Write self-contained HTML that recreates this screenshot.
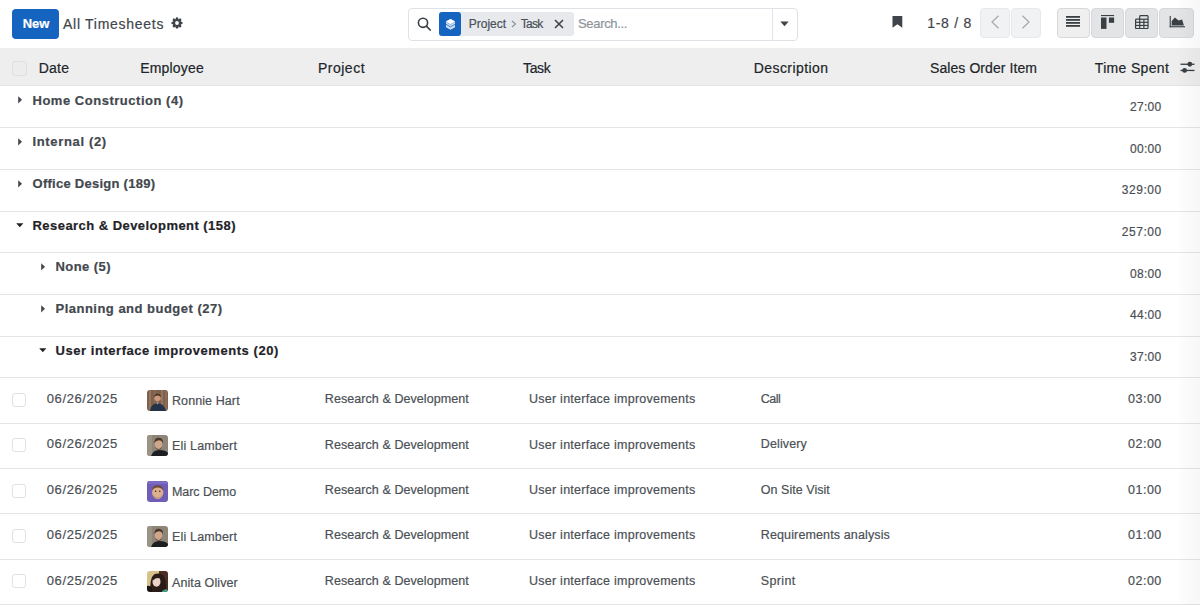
<!DOCTYPE html>
<html><head><meta charset="utf-8"><style>
html,body{margin:0;padding:0;background:#fff;width:1200px;height:605px;overflow:hidden;}
body{position:relative;font-family:"Liberation Sans",sans-serif;}
.t{position:absolute;white-space:nowrap;font-family:"Liberation Sans",sans-serif;-webkit-text-stroke:0.2px currentColor;}
.r{position:absolute;display:block;}
</style></head><body>
<div class="r" style="left:12px;top:9px;width:47px;height:30px;background:#1565c0;border-radius:4px;"></div>
<div class="t" style="left:22.70px;top:17.10px;font-size:13px;line-height:13px;font-weight:bold;color:#ffffff;letter-spacing:-0.075px;">New</div>
<div class="t" style="left:63.00px;top:16.75px;font-size:14px;line-height:14px;color:#41464c;letter-spacing:0.727px;">All Timesheets</div>
<svg class="r" style="left:169.8px;top:16.2px" width="14" height="14" viewBox="0 0 14 14"><g fill="#3f444a"><circle cx="7" cy="7" r="4.1"/><circle cx="11.30" cy="7.00" r="1.35"/><circle cx="10.04" cy="10.04" r="1.35"/><circle cx="7.00" cy="11.30" r="1.35"/><circle cx="3.96" cy="10.04" r="1.35"/><circle cx="2.70" cy="7.00" r="1.35"/><circle cx="3.96" cy="3.96" r="1.35"/><circle cx="7.00" cy="2.70" r="1.35"/><circle cx="10.04" cy="3.96" r="1.35"/></g><circle cx="7" cy="7" r="1.9" fill="#fff"/></svg>
<div class="r" style="left:408px;top:8px;width:389.5px;height:32.5px;border:1px solid #dee2e6;border-radius:4px;background:#fff;box-sizing:border-box;"></div>
<div class="r" style="left:771.5px;top:8px;width:1px;height:32.5px;background:#e2e5e8;"></div>
<svg class="r" style="left:417px;top:17px" width="15" height="14" viewBox="0 0 15 14"><circle cx="6" cy="5.8" r="4.6" fill="none" stroke="#3a3f44" stroke-width="1.6"/><line x1="9.4" y1="9.2" x2="13.2" y2="13" stroke="#3a3f44" stroke-width="1.7" stroke-linecap="round"/></svg>
<div class="r" style="left:439px;top:12px;width:135px;height:23.5px;background:#e7e9ed;border-radius:3px;"></div>
<div class="r" style="left:439px;top:12px;width:21.5px;height:23.5px;background:#1565c0;border-radius:3px;"></div>
<svg class="r" style="left:445.5px;top:18.5px" width="9" height="11" viewBox="0 0 9 11"><path d="M4.5 0 L9 2.6 V8.2 L4.5 10.8 L0 8.2 V2.6 Z" fill="#fff" opacity=".8"/><path d="M4.5 0 L9 2.6 L4.5 5.2 L0 2.6 Z" fill="#fff"/><path d="M0 5.3 L4.5 7.9 L9 5.3" fill="none" stroke="#1565c0" stroke-width=".8"/><path d="M0 2.9 L4.5 5.5 L9 2.9" fill="none" stroke="#1565c0" stroke-width=".6" opacity=".6"/></svg>
<div class="t" style="left:468.80px;top:17.84px;font-size:12px;line-height:12px;color:#495057;letter-spacing:-0.025px;">Project</div>
<svg class="r" style="left:511px;top:20px" width="6" height="8" viewBox="0 0 6 8"><path d="M1 1 L4.5 4 L1 7" fill="none" stroke="#8a9097" stroke-width="1.1"/></svg>
<div class="t" style="left:520.80px;top:17.84px;font-size:12px;line-height:12px;color:#495057;letter-spacing:-0.750px;">Task</div>
<svg class="r" style="left:554px;top:18.5px" width="10" height="10" viewBox="0 0 10 10"><path d="M1 1 L9 9 M9 1 L1 9" stroke="#3f444a" stroke-width="1.6"/></svg>
<div class="t" style="left:578.00px;top:17.10px;font-size:13px;line-height:13px;color:#8f959b;letter-spacing:-0.325px;">Search...</div>
<svg class="r" style="left:780px;top:21px" width="9" height="6" viewBox="0 0 9 6"><path d="M0.3 0.5 L8.7 0.5 L4.5 5.3 Z" fill="#3f444a"/></svg>
<svg class="r" style="left:892px;top:16px" width="11" height="12" viewBox="0 0 11 12"><path d="M0.5 0 H10.3 V11.7 L5.4 8.3 L0.5 11.7 Z" fill="#3f444a"/></svg>
<div class="t" style="left:927.20px;top:15.95px;font-size:14px;line-height:14px;color:#3f444a;letter-spacing:0.717px;">1-8 / 8</div>
<div class="r" style="left:980px;top:8px;width:30px;height:30px;background:#f1f2f4;border:1px solid #e6e8eb;border-radius:4px;box-sizing:border-box;"></div>
<div class="r" style="left:1011.2px;top:8px;width:30.3px;height:30px;background:#f1f2f4;border:1px solid #e6e8eb;border-radius:4px;box-sizing:border-box;"></div>
<svg class="r" style="left:990px;top:15px" width="10" height="14" viewBox="0 0 10 14"><path d="M8.5 0.8 L2 7 L8.5 13.2" fill="none" stroke="#a3a8ad" stroke-width="1.2"/></svg>
<svg class="r" style="left:1021px;top:15px" width="10" height="14" viewBox="0 0 10 14"><path d="M1.5 0.8 L8 7 L1.5 13.2" fill="none" stroke="#a3a8ad" stroke-width="1.2"/></svg>
<div class="r" style="left:1057px;top:7.5px;width:33px;height:30px;background:#efefef;border:1px solid #d6d8db;border-radius:4px;box-sizing:border-box;"></div>
<div class="r" style="left:1091px;top:7.5px;width:33px;height:30px;background:#e2e4e6;border:1px solid #d6d8db;border-radius:4px;box-sizing:border-box;"></div>
<div class="r" style="left:1125px;top:7.5px;width:33px;height:30px;background:#e2e4e6;border:1px solid #d6d8db;border-radius:4px;box-sizing:border-box;"></div>
<div class="r" style="left:1159px;top:7.5px;width:35px;height:30px;background:#e2e4e6;border:1px solid #d6d8db;border-radius:4px;box-sizing:border-box;"></div>
<svg class="r" style="left:1066px;top:16px" width="14" height="11" viewBox="0 0 14 11"><g fill="#3a3f44"><rect x="0" y="0" width="14" height="1.8"/><rect x="0" y="3" width="14" height="1.8"/><rect x="0" y="6" width="14" height="1.8"/><rect x="0" y="9" width="14" height="1.8"/></g></svg>
<svg class="r" style="left:1100.8px;top:15px" width="14" height="14" viewBox="0 0 14 14"><g fill="#3a3f44"><rect x="0" y="0" width="13.1" height="1.1"/><rect x="0" y="2.5" width="5.5" height="11.4"/><rect x="7.9" y="2.5" width="5.2" height="5.3"/></g></svg>
<svg class="r" style="left:1134.7px;top:14.9px" width="14.4" height="14.4" viewBox="0 0 15 15"><g fill="none" stroke="#3a3f44" stroke-width="1.25"><path d="M4.9 4.4 V1.6 Q4.9 0.6 5.9 0.6 H12.6 Q13.6 0.6 13.6 1.6 V13.1 Q13.6 14.1 12.6 14.1 H1.6 Q0.6 14.1 0.6 13.1 V5.4 Q0.6 4.4 1.6 4.4 Z"/><line x1="0.6" y1="7.6" x2="13.6" y2="7.6"/><line x1="0.6" y1="10.9" x2="13.6" y2="10.9"/><line x1="4.9" y1="4.4" x2="4.9" y2="14.1"/><line x1="9.25" y1="4.4" x2="9.25" y2="14.1"/><line x1="4.9" y1="4.4" x2="13.6" y2="4.4"/></g></svg>
<svg class="r" style="left:1168.5px;top:15px" width="17" height="14" viewBox="0 0 17 14"><g fill="#3a3f44"><rect x="0.7" y="1" width="1.1" height="11.3"/><rect x="0.7" y="11.2" width="15.3" height="1.1"/><path d="M2.7 10.5 V6 L5.9 2.4 L9.6 5.6 L13.1 4.6 L14.9 10.5 Z"/></g></svg>
<div class="r" style="left:0px;top:48px;width:1200px;height:37.5px;background:#eeeeee;"></div>
<div class="r" style="left:0px;top:85px;width:1200px;height:1px;background:#e3e3e3;"></div>
<div class="r" style="left:12px;top:61px;width:14.5px;height:15px;border:1px solid #e0e0e0;border-radius:3px;background:#ececec;box-sizing:border-box;"></div>
<div class="t" style="left:38.70px;top:61.45px;font-size:14px;line-height:14px;color:#212529;letter-spacing:0.250px;">Date</div>
<div class="t" style="left:140.30px;top:61.45px;font-size:14px;line-height:14px;color:#212529;letter-spacing:0.164px;">Employee</div>
<div class="t" style="left:318.00px;top:61.45px;font-size:14px;line-height:14px;color:#212529;letter-spacing:0.492px;">Project</div>
<div class="t" style="left:523.00px;top:61.45px;font-size:14px;line-height:14px;color:#212529;letter-spacing:-0.367px;">Task</div>
<div class="t" style="left:753.75px;top:61.45px;font-size:14px;line-height:14px;color:#212529;letter-spacing:0.420px;">Description</div>
<div class="t" style="left:930.00px;top:61.45px;font-size:14px;line-height:14px;color:#212529;letter-spacing:0.080px;">Sales Order Item</div>
<div class="t" style="left:1094.80px;top:61.45px;font-size:14px;line-height:14px;color:#212529;letter-spacing:0.328px;">Time Spent</div>
<svg class="r" style="left:1180px;top:61px" width="15" height="13" viewBox="0 0 15 13"><g fill="#3a3f44"><rect x="0.5" y="2.6" width="14" height="1.3"/><rect x="0.5" y="8.8" width="14" height="1.3"/><circle cx="9.8" cy="3.25" r="2.4"/><circle cx="4.6" cy="9.45" r="2.4"/></g></svg>
<svg class="r" style="left:18.0px;top:96.30px" width="5" height="8" viewBox="0 0 5 8"><path d="M0.2 0.2 V7.5 L4 3.85 Z" fill="#43484e"/></svg>
<div class="t" style="left:32.50px;top:93.50px;font-size:13px;line-height:13px;font-weight:bold;color:#43484e;letter-spacing:0.520px;">Home Construction (4)</div>
<div class="t" style="left:1130.00px;top:100.84px;font-size:12px;line-height:12px;color:#4b5055;letter-spacing:0.300px;">27:00</div>
<div class="r" style="left:0px;top:127.21px;width:1200px;height:1px;background:#e4e5e6;"></div>
<svg class="r" style="left:18.0px;top:138.01px" width="5" height="8" viewBox="0 0 5 8"><path d="M0.2 0.2 V7.5 L4 3.85 Z" fill="#43484e"/></svg>
<div class="t" style="left:32.50px;top:135.21px;font-size:13px;line-height:13px;font-weight:bold;color:#43484e;letter-spacing:0.659px;">Internal (2)</div>
<div class="t" style="left:1130.00px;top:142.55px;font-size:12px;line-height:12px;color:#4b5055;letter-spacing:0.300px;">00:00</div>
<div class="r" style="left:0px;top:168.92px;width:1200px;height:1px;background:#e4e5e6;"></div>
<svg class="r" style="left:18.0px;top:179.72px" width="5" height="8" viewBox="0 0 5 8"><path d="M0.2 0.2 V7.5 L4 3.85 Z" fill="#43484e"/></svg>
<div class="t" style="left:32.50px;top:176.92px;font-size:13px;line-height:13px;font-weight:bold;color:#43484e;letter-spacing:0.264px;">Office Design (189)</div>
<div class="t" style="left:1121.75px;top:184.26px;font-size:12px;line-height:12px;color:#4b5055;letter-spacing:0.560px;">329:00</div>
<div class="r" style="left:0px;top:210.63px;width:1200px;height:1px;background:#e4e5e6;"></div>
<svg class="r" style="left:16.30px;top:222.83px" width="8" height="5" viewBox="0 0 8 5"><path d="M0.2 0.3 H7.4 L3.8 4.3 Z" fill="#1f2328"/></svg>
<div class="t" style="left:32.50px;top:218.63px;font-size:13px;line-height:13px;font-weight:bold;color:#1f2328;letter-spacing:0.454px;">Research &amp; Development (158)</div>
<div class="t" style="left:1121.75px;top:225.97px;font-size:12px;line-height:12px;color:#4b5055;letter-spacing:0.560px;">257:00</div>
<div class="r" style="left:0px;top:252.34px;width:1200px;height:1px;background:#e4e5e6;"></div>
<svg class="r" style="left:40.5px;top:263.14px" width="5" height="8" viewBox="0 0 5 8"><path d="M0.2 0.2 V7.5 L4 3.85 Z" fill="#43484e"/></svg>
<div class="t" style="left:55.50px;top:260.34px;font-size:13px;line-height:13px;font-weight:bold;color:#43484e;letter-spacing:0.429px;">None (5)</div>
<div class="t" style="left:1130.00px;top:267.68px;font-size:12px;line-height:12px;color:#4b5055;letter-spacing:0.300px;">08:00</div>
<div class="r" style="left:0px;top:294.05px;width:1200px;height:1px;background:#e4e5e6;"></div>
<svg class="r" style="left:40.5px;top:304.85px" width="5" height="8" viewBox="0 0 5 8"><path d="M0.2 0.2 V7.5 L4 3.85 Z" fill="#43484e"/></svg>
<div class="t" style="left:55.50px;top:302.05px;font-size:13px;line-height:13px;font-weight:bold;color:#43484e;letter-spacing:0.489px;">Planning and budget (27)</div>
<div class="t" style="left:1130.00px;top:309.39px;font-size:12px;line-height:12px;color:#4b5055;letter-spacing:0.300px;">44:00</div>
<div class="r" style="left:0px;top:335.76px;width:1200px;height:1px;background:#e4e5e6;"></div>
<svg class="r" style="left:38.80px;top:347.96px" width="8" height="5" viewBox="0 0 8 5"><path d="M0.2 0.3 H7.4 L3.8 4.3 Z" fill="#1f2328"/></svg>
<div class="t" style="left:55.50px;top:343.76px;font-size:13px;line-height:13px;font-weight:bold;color:#1f2328;letter-spacing:0.544px;">User interface improvements (20)</div>
<div class="t" style="left:1130.00px;top:351.10px;font-size:12px;line-height:12px;color:#4b5055;letter-spacing:0.300px;">37:00</div>
<div class="r" style="left:0px;top:377.47px;width:1200px;height:1px;background:#e4e5e6;"></div>
<div class="r" style="left:12px;top:392.7px;width:14px;height:14px;border:1px solid #dfe1e4;border-radius:3px;background:#fff;box-sizing:border-box;"></div>
<div class="t" style="left:46.75px;top:392.00px;font-size:13px;line-height:13px;color:#4b5055;letter-spacing:0.606px;">06/26/2025</div>
<svg class="r" style="left:147px;top:389.70px;border-radius:3px" width="21" height="21" viewBox="0 0 21 21"><rect width="21" height="21" fill="#7e604c"/><rect x="2" y="0" width="2" height="21" fill="#94755e"/><rect x="7" y="0" width="1.5" height="21" fill="#8a6b55"/><rect x="14" y="0" width="2" height="21" fill="#94755e"/><rect x="18" y="0" width="2" height="21" fill="#8b6d57"/><path d="M3 21 Q4 13.5 10.5 13 Q17 13.5 19 21 Z" fill="#22334a"/><path d="M9 12.5 L10.5 14.5 L12 12.5 Z" fill="#c9b7a8"/><ellipse cx="10.5" cy="8.3" rx="3.2" ry="4" fill="#c99a7f"/><path d="M7.2 7.5 Q7 3.8 10.5 3.8 Q14 3.8 13.8 7.5 Q13 5.6 10.5 5.6 Q8 5.6 7.2 7.5 Z" fill="#4a3426"/><path d="M7.6 9.5 Q10.5 14 13.4 9.5 Q13 12.4 10.5 12.5 Q8 12.4 7.6 9.5 Z" fill="#6e4a36"/></svg>
<div class="t" style="left:172.00px;top:394.92px;font-size:12.5px;line-height:12.5px;color:#4b5055;letter-spacing:0.090px;">Ronnie Hart</div>
<div class="t" style="left:324.80px;top:393.22px;font-size:12.5px;line-height:12.5px;color:#4b5055;letter-spacing:0.074px;">Research &amp; Development</div>
<div class="t" style="left:529.00px;top:393.22px;font-size:12.5px;line-height:12.5px;color:#4b5055;letter-spacing:0.248px;">User interface improvements</div>
<div class="t" style="left:760.80px;top:393.02px;font-size:12.5px;line-height:12.5px;color:#4b5055;letter-spacing:-0.483px;">Call</div>
<div class="t" style="left:1128.10px;top:393.02px;font-size:12.5px;line-height:12.5px;color:#4b5055;letter-spacing:0.475px;">03:00</div>
<div class="r" style="left:0px;top:422.6px;width:1200px;height:1px;background:#e4e5e6;"></div>
<div class="r" style="left:12px;top:438.1px;width:14px;height:14px;border:1px solid #dfe1e4;border-radius:3px;background:#fff;box-sizing:border-box;"></div>
<div class="t" style="left:46.75px;top:437.40px;font-size:13px;line-height:13px;color:#4b5055;letter-spacing:0.606px;">06/26/2025</div>
<svg class="r" style="left:147px;top:435.10px;border-radius:3px" width="21" height="21" viewBox="0 0 21 21"><rect width="21" height="21" fill="#8d8577"/><rect x="0" y="0" width="5" height="21" fill="#9b9384"/><path d="M4 21 Q6 15 12 15 Q19 15 21 18 V21 Z" fill="#1d1e22"/><ellipse cx="11.5" cy="9.5" rx="3.8" ry="5" fill="#cfa58c"/><path d="M7.3 8 Q7.5 2.5 12 2.8 Q16.5 3 16 8.5 Q15 5.2 12 5.2 Q9 5.2 7.3 8 Z" fill="#4b3628"/><path d="M8.2 11.5 Q11.5 16.5 15 11.5 Q14.8 14.6 11.5 14.8 Q8.6 14.6 8.2 11.5 Z" fill="#5b4334"/></svg>
<div class="t" style="left:172.00px;top:440.32px;font-size:12.5px;line-height:12.5px;color:#4b5055;letter-spacing:0.170px;">Eli Lambert</div>
<div class="t" style="left:324.80px;top:438.62px;font-size:12.5px;line-height:12.5px;color:#4b5055;letter-spacing:0.074px;">Research &amp; Development</div>
<div class="t" style="left:529.00px;top:438.62px;font-size:12.5px;line-height:12.5px;color:#4b5055;letter-spacing:0.248px;">User interface improvements</div>
<div class="t" style="left:760.80px;top:438.42px;font-size:12.5px;line-height:12.5px;color:#4b5055;letter-spacing:0.121px;">Delivery</div>
<div class="t" style="left:1128.10px;top:438.42px;font-size:12.5px;line-height:12.5px;color:#4b5055;letter-spacing:0.475px;">02:00</div>
<div class="r" style="left:0px;top:468.0px;width:1200px;height:1px;background:#e4e5e6;"></div>
<div class="r" style="left:12px;top:483.5px;width:14px;height:14px;border:1px solid #dfe1e4;border-radius:3px;background:#fff;box-sizing:border-box;"></div>
<div class="t" style="left:46.75px;top:482.80px;font-size:13px;line-height:13px;color:#4b5055;letter-spacing:0.606px;">06/26/2025</div>
<svg class="r" style="left:147px;top:480.50px;border-radius:3px" width="21" height="21" viewBox="0 0 21 21"><rect width="21" height="21" fill="#6f5db8"/><rect x="0" y="0" width="21" height="3" fill="#7c6bc4"/><ellipse cx="10.7" cy="11.3" rx="5.6" ry="6.6" fill="#dcb08d"/><path d="M5.1 10 Q5 4.2 10.7 4.2 Q16.4 4.2 16.3 10 Q15 6.5 10.7 6.5 Q6.4 6.5 5.1 10 Z" fill="#704838"/><circle cx="8.6" cy="10.2" r=".8" fill="#3a2a22"/><circle cx="12.8" cy="10.2" r=".8" fill="#3a2a22"/><path d="M6.5 14 Q10.7 18.8 15 14 Q14.5 17.6 10.7 17.8 Q7 17.6 6.5 14 Z" fill="#c79a78"/></svg>
<div class="t" style="left:172.00px;top:485.72px;font-size:12.5px;line-height:12.5px;color:#4b5055;letter-spacing:-0.062px;">Marc Demo</div>
<div class="t" style="left:324.80px;top:484.02px;font-size:12.5px;line-height:12.5px;color:#4b5055;letter-spacing:0.074px;">Research &amp; Development</div>
<div class="t" style="left:529.00px;top:484.02px;font-size:12.5px;line-height:12.5px;color:#4b5055;letter-spacing:0.248px;">User interface improvements</div>
<div class="t" style="left:760.80px;top:483.82px;font-size:12.5px;line-height:12.5px;color:#4b5055;letter-spacing:0.038px;">On Site Visit</div>
<div class="t" style="left:1128.10px;top:483.82px;font-size:12.5px;line-height:12.5px;color:#4b5055;letter-spacing:0.475px;">01:00</div>
<div class="r" style="left:0px;top:513.4px;width:1200px;height:1px;background:#e4e5e6;"></div>
<div class="r" style="left:12px;top:528.9px;width:14px;height:14px;border:1px solid #dfe1e4;border-radius:3px;background:#fff;box-sizing:border-box;"></div>
<div class="t" style="left:46.75px;top:528.20px;font-size:13px;line-height:13px;color:#4b5055;letter-spacing:0.606px;">06/25/2025</div>
<svg class="r" style="left:147px;top:525.90px;border-radius:3px" width="21" height="21" viewBox="0 0 21 21"><rect width="21" height="21" fill="#8d8577"/><rect x="0" y="0" width="5" height="21" fill="#9b9384"/><path d="M4 21 Q6 15 12 15 Q19 15 21 18 V21 Z" fill="#1d1e22"/><ellipse cx="11.5" cy="9.5" rx="3.8" ry="5" fill="#cfa58c"/><path d="M7.3 8 Q7.5 2.5 12 2.8 Q16.5 3 16 8.5 Q15 5.2 12 5.2 Q9 5.2 7.3 8 Z" fill="#4b3628"/><path d="M8.2 11.5 Q11.5 16.5 15 11.5 Q14.8 14.6 11.5 14.8 Q8.6 14.6 8.2 11.5 Z" fill="#5b4334"/></svg>
<div class="t" style="left:172.00px;top:531.12px;font-size:12.5px;line-height:12.5px;color:#4b5055;letter-spacing:0.170px;">Eli Lambert</div>
<div class="t" style="left:324.80px;top:529.42px;font-size:12.5px;line-height:12.5px;color:#4b5055;letter-spacing:0.074px;">Research &amp; Development</div>
<div class="t" style="left:529.00px;top:529.42px;font-size:12.5px;line-height:12.5px;color:#4b5055;letter-spacing:0.248px;">User interface improvements</div>
<div class="t" style="left:760.80px;top:529.22px;font-size:12.5px;line-height:12.5px;color:#4b5055;letter-spacing:0.127px;">Requirements analysis</div>
<div class="t" style="left:1128.10px;top:529.22px;font-size:12.5px;line-height:12.5px;color:#4b5055;letter-spacing:0.475px;">01:00</div>
<div class="r" style="left:0px;top:558.8px;width:1200px;height:1px;background:#e4e5e6;"></div>
<div class="r" style="left:12px;top:574.3px;width:14px;height:14px;border:1px solid #dfe1e4;border-radius:3px;background:#fff;box-sizing:border-box;"></div>
<div class="t" style="left:46.75px;top:573.60px;font-size:13px;line-height:13px;color:#4b5055;letter-spacing:0.606px;">06/25/2025</div>
<svg class="r" style="left:147px;top:571.30px;border-radius:3px" width="21" height="21" viewBox="0 0 21 21"><rect width="21" height="21" fill="#d8c28c"/><rect x="12" y="0" width="9" height="21" fill="#4a2f24"/><path d="M3.5 21 Q2.5 7 7 3.5 Q11 1.5 15 3.5 Q19 6 19 14 L19 21 Z" fill="#2a1d18"/><ellipse cx="9.5" cy="10.8" rx="4" ry="5" fill="#ead2c4"/><path d="M5.5 8.5 Q6.8 4 12.5 5 L12 7.2 Q9 6.5 5.8 9.5 Z" fill="#2a1d18"/><path d="M0 15 Q3 14 5 17 L5 21 H0 Z" fill="#1a1412"/><path d="M15 20 L19 18 L21 19.5 L21 21 H15 Z" fill="#3ba88c"/></svg>
<div class="t" style="left:172.00px;top:576.52px;font-size:12.5px;line-height:12.5px;color:#4b5055;letter-spacing:0.100px;">Anita Oliver</div>
<div class="t" style="left:324.80px;top:574.82px;font-size:12.5px;line-height:12.5px;color:#4b5055;letter-spacing:0.074px;">Research &amp; Development</div>
<div class="t" style="left:529.00px;top:574.82px;font-size:12.5px;line-height:12.5px;color:#4b5055;letter-spacing:0.248px;">User interface improvements</div>
<div class="t" style="left:760.80px;top:574.62px;font-size:12.5px;line-height:12.5px;color:#4b5055;letter-spacing:0.370px;">Sprint</div>
<div class="t" style="left:1128.10px;top:574.62px;font-size:12.5px;line-height:12.5px;color:#4b5055;letter-spacing:0.475px;">02:00</div>
<div class="r" style="left:0px;top:604.2px;width:1200px;height:1px;background:#e4e5e6;"></div>
<div class="r" style="left:1176px;top:0px;width:24px;height:605px;background:linear-gradient(to right, rgba(0,0,0,0), rgba(0,0,0,0.025) 60%, rgba(0,0,0,0.03));"></div>
</body></html>
